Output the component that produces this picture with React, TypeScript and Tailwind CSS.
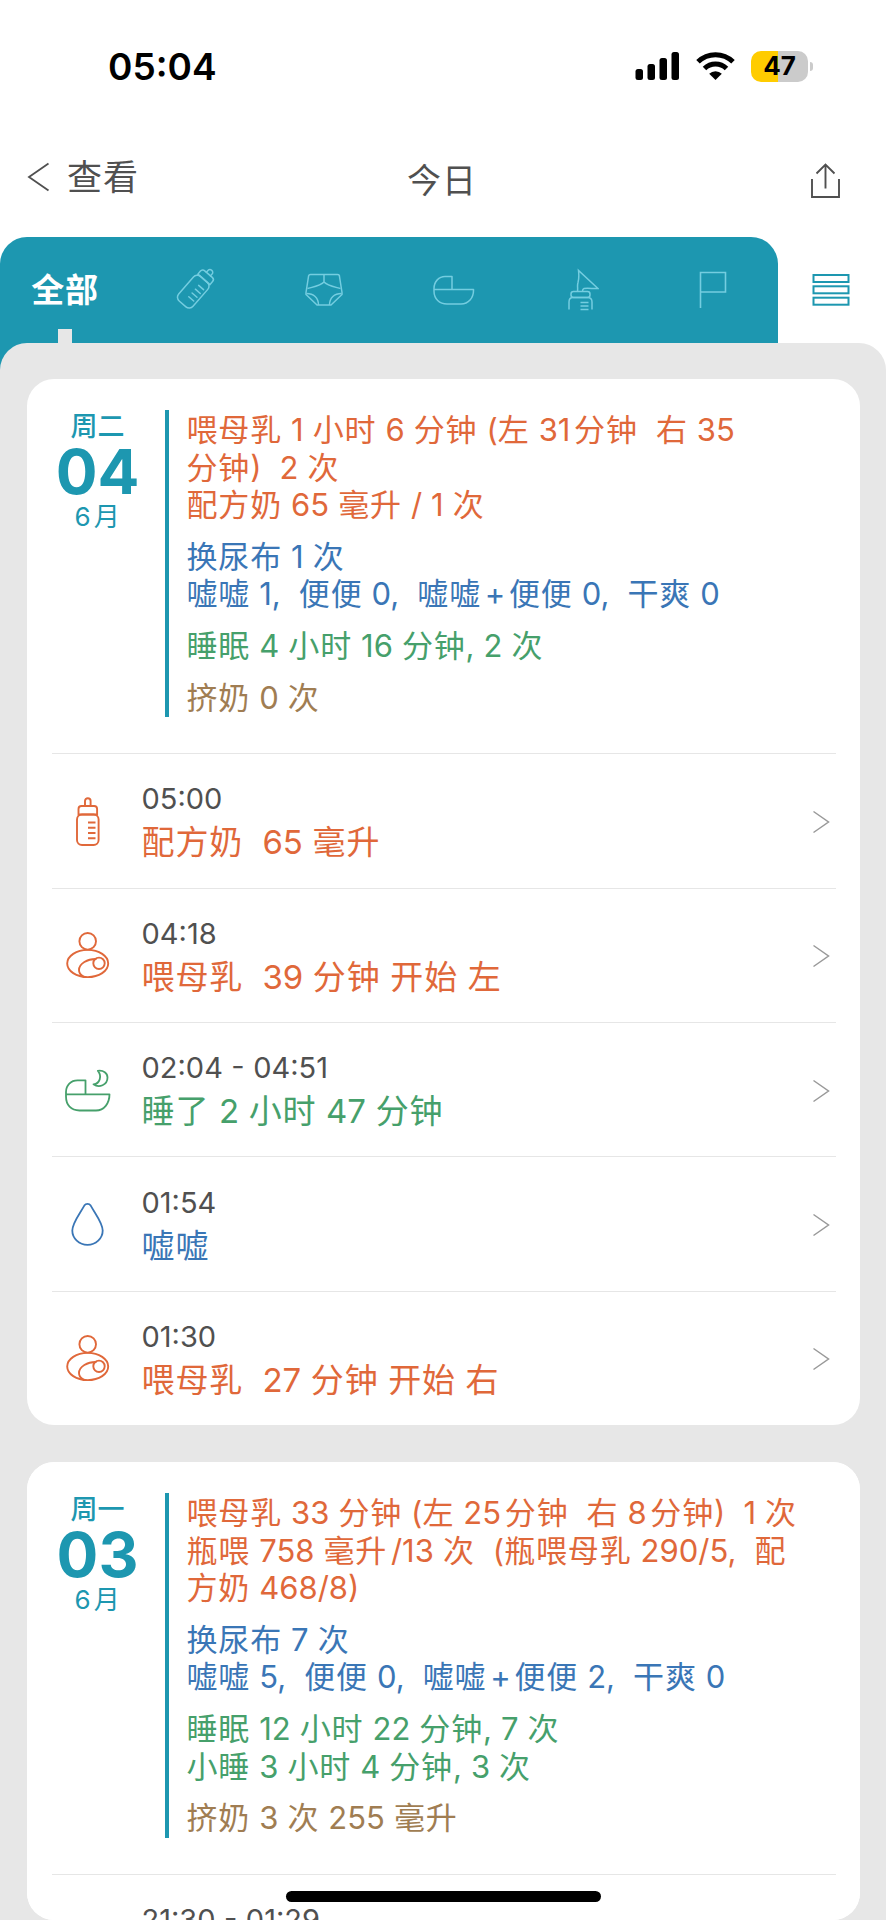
import type { ReactNode } from 'react'

type Tone = 'orange' | 'blue' | 'green' | 'brown'

interface Block {
  tone: Tone
  lines: string[]
}

interface Entry {
  time: string
  title: string
  tone: Tone
  icon: ReactNode
}

interface Day {
  weekday: string
  day: string
  month: string
  summary: Block[]
  entries: Entry[]
}

const TONES: Record<Tone, string> = {
  orange: 'text-[#e0683a]',
  blue: 'text-[#3a76b6]',
  green: 'text-[#46a06b]',
  brown: 'text-[#a07d52]',
}

const HAN = /[\u4e00-\u9fff]/

// Han characters are set slightly looser than latin text, and a digit
// that touches one directly gets a small gap
function Mixed({ text }: { text: string }) {
  const runs = text.match(/[\u4e00-\u9fff]+|[^\u4e00-\u9fff]+/g) || []
  return (
    <>
      {runs.map((run, i) => {
        const prev = runs[i - 1] || ''
        const gap = HAN.test(run) ? /[\d+/]$/.test(prev) : i > 0 && /^[\d+/]/.test(run)
        return (
          <span key={i} className={`${HAN.test(run) ? 'tracking-[0.027em]' : 'tracking-[0em]'} ${gap ? 'ml-[0.12em]' : ''}`}>
            {run}
          </span>
        )
      })}
    </>
  )
}

function BottleIcon() {
  return (
    <svg width="48" height="54" viewBox="0 0 48 54" fill="none" stroke="currentColor" strokeWidth="1.9" strokeLinecap="round">
      <path d="M22 12V7a2.800 2.800 0 0 1 5.600 0V12" />
      <path d="M15.500 20.500V15a3 3 0 0 1 3-3h12.600a3 3 0 0 1 3 3v5.500z" />
      <rect x="14" y="20.500" width="21.600" height="30.500" rx="5" />
      <path d="M25 28.500h7.500M25 33.800h7.500M25 39h7.500M25 44.300h7.500" strokeLinecap="butt" />
    </svg>
  )
}

function NursingIcon() {
  return (
    <svg width="48" height="54" viewBox="0 0 48 54" fill="none" stroke="currentColor" strokeWidth="1.9">
      <circle cx="24.700" cy="13.300" r="8.300" />
      <ellipse cx="24.700" cy="35.500" rx="20.500" ry="13.600" />
      <circle cx="36" cy="35.300" r="5.700" />
      <path d="M33.500 31c-9-.3-17.500 4.500-17.500 11 0 2.800 1.500 5 4.500 6.500" />
    </svg>
  )
}

function CradleIcon() {
  return (
    <svg width="48" height="54" viewBox="0 0 48 54" fill="none" stroke="currentColor" strokeWidth="1.8" strokeLinejoin="round">
      <path d="M3 31.300h43.500C46.500 40.500 41 47.500 33 47.500H16.500C8 47.500 3 42 3 33.500V29C3 22 8 17.300 14.500 17.300h8v14" />
      <path d="M34.800 7.800c4.500 5.500 2 12.800-4.300 13.500 5.500 4 14 .8 14-6.800 0-4.500-4-7.500-9.700-6.700z" />
    </svg>
  )
}

function DropIcon() {
  return (
    <svg width="48" height="54" viewBox="0 0 48 54" fill="none" stroke="currentColor" strokeWidth="1.8">
      <path d="M21.300 8.600c1.600-2.400 4.800-2.400 6.400 0 5 8.900 12 17.400 12 25a15.200 14.300 0 0 1-30.400 0c0-7.600 7-16.100 12-25z" />
    </svg>
  )
}

const DAYS: Day[] = [
  {
    weekday: '周二',
    day: '04',
    month: '6月',
    summary: [
      { tone: 'orange', lines: ['喂母乳 1 小时 6 分钟 (左 31分钟  右 35', '分钟)  2 次', '配方奶 65 毫升 / 1 次'] },
      { tone: 'blue', lines: ['换尿布 1 次', '嘘嘘 1,  便便 0,  嘘嘘+便便 0,  干爽 0'] },
      { tone: 'green', lines: ['睡眠 4 小时 16 分钟, 2 次'] },
      { tone: 'brown', lines: ['挤奶 0 次'] },
    ],
    entries: [
      { time: '05:00', title: '配方奶  65 毫升', tone: 'orange', icon: <BottleIcon /> },
      { time: '04:18', title: '喂母乳  39 分钟 开始 左', tone: 'orange', icon: <NursingIcon /> },
      { time: '02:04 - 04:51', title: '睡了 2 小时 47 分钟', tone: 'green', icon: <CradleIcon /> },
      { time: '01:54', title: '嘘嘘', tone: 'blue', icon: <DropIcon /> },
      { time: '01:30', title: '喂母乳  27 分钟 开始 右', tone: 'orange', icon: <NursingIcon /> },
    ],
  },
  {
    weekday: '周一',
    day: '03',
    month: '6月',
    summary: [
      { tone: 'orange', lines: ['喂母乳 33 分钟 (左 25分钟  右 8分钟)  1 次', '瓶喂 758 毫升/13 次  (瓶喂母乳 290/5,  配', '方奶 468/8)'] },
      { tone: 'blue', lines: ['换尿布 7 次', '嘘嘘 5,  便便 0,  嘘嘘+便便 2,  干爽 0'] },
      { tone: 'green', lines: ['睡眠 12 小时 22 分钟, 7 次', '小睡 3 小时 4 分钟, 3 次'] },
      { tone: 'brown', lines: ['挤奶 3 次 255 毫升'] },
    ],
    entries: [{ time: '21:30 - 01:29', title: '', tone: 'green', icon: null }],
  },
]

function StatusBar() {
  return (
    <div className="flex h-[132px] items-center pl-[108px] pr-[73px]">
      <span className="flex-1 text-[37px] font-semibold leading-none text-black">05:04</span>
      <svg width="45" height="28" viewBox="0 0 45 28" className="mr-4 text-black" fill="currentColor">
        <rect x="0.500" y="17" width="7.500" height="11" rx="2.500" />
        <rect x="12.500" y="12" width="7.500" height="16" rx="2.500" />
        <rect x="24.500" y="6" width="7.500" height="22" rx="2.500" />
        <rect x="36.500" y="0" width="7.500" height="28" rx="2.500" />
      </svg>
      <svg width="39" height="28" viewBox="0 0 39 28" className="mr-4 text-black" fill="none" stroke="currentColor">
        <path d="M2 9.800a25 25 0 0 1 35 0" strokeWidth="5" />
        <path d="M8.500 16.500a15.800 15.800 0 0 1 22 0" strokeWidth="5" />
        <path d="M13.200 21.700a9 9 0 0 1 12.600 0L19.500 28z" fill="currentColor" stroke="none" />
      </svg>
      <div className="flex h-[31px] w-[57px] items-center justify-center rounded-[10px] bg-[linear-gradient(90deg,#ffcc00_47%,#cbcbcb_47%)]">
        <span className="text-[26px] font-bold leading-none text-black">47</span>
      </div>
      <div className="ml-0.5 h-[9px] w-[3px] rounded-r-full bg-[#cbcbcb]" />
    </div>
  )
}

function NavBar() {
  return (
    <div className="flex h-[105px] items-start justify-between pl-[27px] pr-[45px] text-[#505050]">
      <div className="flex w-[200px] items-center pt-[23px]">
        <svg width="24" height="32" viewBox="0 0 24 32" fill="none" stroke="currentColor" strokeWidth="1.800">
          <path d="M21.500 2.500L2 16l19.500 13.500" />
        </svg>
        <span className="ml-4 text-[35px] leading-[44px] tracking-[0.03em]">查看</span>
      </div>
      <span className="pt-[27px] text-[34px] leading-[44px] tracking-[0.03em]">今日</span>
      <div className="flex w-[184px] justify-end pt-[30px]">
        <svg width="32" height="38" viewBox="0 0 32 38" fill="none" stroke="currentColor" strokeWidth="1.900">
          <path d="M3 17v18h27V17M16.500 26.500V2.500M7.500 11.500l9-9 9 9" />
        </svg>
      </div>
    </div>
  )
}

function TabBar() {
  return (
    <div className="flex h-[106px]">
      <div className="relative flex h-[140px] w-[778px] rounded-t-[27px] bg-[#1d97b0] text-[#74cde0]">
        <div className="flex h-[106px] w-[130px] items-center justify-center pt-0.5 text-[33px] font-bold tracking-[0.02em] text-white">
          全部
        </div>
        <div className="flex h-[106px] w-[129px] items-center justify-center">
          <svg width="44" height="44" viewBox="0 0 44 44" fill="none" stroke="currentColor" strokeWidth="1.500" strokeLinecap="round">
            <g transform="translate(24 19.300) rotate(41)">
              <path d="M-2.700-17.500v-2.300a2.700 2.700 0 0 1 5.400 0v2.300" />
              <path d="M-8-10.500v-4a3 3 0 0 1 3-3H5a3 3 0 0 1 3 3v4z" />
              <rect x="-9.500" y="-10.500" width="19" height="32.500" rx="5" />
              <path d="M0-2.500h6.500M0 2.500h6.500M0 7.500h6.500M0 12.500h6.500" />
            </g>
          </svg>
        </div>
        <div className="flex h-[106px] w-[130px] items-center justify-center">
          <svg width="38" height="34" viewBox="0 0 38 34" fill="none" stroke="currentColor" strokeWidth="1.500" strokeLinejoin="round">
            <path d="M5.500 1.500h27a2 2 0 0 1 2 2L37 19.500v2L26 32H12L1 21.500v-2L3.500 3.500a2 2 0 0 1 2-2z" />
            <path d="M19 1.500V9M2.500 15.500C10 13.500 16 12.500 19 9c3 3.500 9 4.500 16.500 6.500" />
            <path d="M1.500 20.500c7 0 12 4 12 11.500M36.500 20.500c-7 0-12 4-12 11.500" />
          </svg>
        </div>
        <div className="flex h-[106px] w-[129px] items-center justify-center">
          <svg width="42" height="32" viewBox="0 0 42 32" fill="none" stroke="currentColor" strokeWidth="1.500" strokeLinejoin="round">
            <path d="M1 15.500h39.500v1c0 7.500-5 13.500-12.500 13.500H14C6.500 30 1 25 1 17v-2.500C1 7.500 6 2.500 12 2.500h7v13" />
          </svg>
        </div>
        <div className="flex h-[106px] w-[129px] items-center justify-center">
          <svg width="32" height="44" viewBox="0 0 32 44" fill="none" stroke="currentColor" strokeWidth="1.500">
            <path d="M10.500 23.500c.5-4-.5-6 .5-9 1.200-4 1-7.500.5-12L31 20.500c-4 .5-10-1-14 0-1.200.3-1.500 1-1.500 3" />
            <rect x="4" y="23.500" width="19" height="6" rx="2.500" />
            <path d="M2 41.500V34c0-2.500 1.500-4.500 4-4.500h14.500c3 0 4.500 2 4.500 4.500v7.500M13.500 34.500h8M13.500 38h8M13.500 41.500h8" />
          </svg>
        </div>
        <div className="flex h-[106px] w-[131px] items-center justify-center">
          <svg width="28" height="38" viewBox="0 0 28 38" fill="none" stroke="currentColor" strokeWidth="1.600">
            <path d="M1.500 37V1.500h25V21h-25" />
          </svg>
        </div>
        <div className="absolute left-[58px] top-[92px] h-4 w-[13.500px] bg-[#e7e7e7]" />
      </div>
      <div className="flex flex-1 items-center justify-center pr-0.5 text-[#1d97b0]">
        <svg width="38" height="34" viewBox="0 0 38 34" fill="none" stroke="currentColor" strokeWidth="2">
          <rect x="1.500" y="2" width="35" height="7" />
          <rect x="1.500" y="13.300" width="35" height="7" />
          <rect x="1.500" y="24.700" width="35" height="7" />
        </svg>
      </div>
    </div>
  )
}

function EntryRow({ entry }: { entry: Entry }) {
  return (
    <div className="ml-[25px] mr-[24px] flex h-[134.400px] items-center border-t-[1.500px] border-[#e6e6e6]">
      <div className={`ml-[11px] flex w-12 justify-center ${TONES[entry.tone]}`}>{entry.icon}</div>
      <div className="ml-[31px] flex-1 whitespace-pre pt-[3px] [word-spacing:0.02em]">
        <div className="text-[29px] leading-[40px] text-[#505050]">{entry.time}</div>
        <div className={`h-[46px] text-[33px] leading-[46px] ${TONES[entry.tone]}`}>
          <Mixed text={entry.title} />
        </div>
      </div>
      <svg width="20" height="26" viewBox="0 0 20 26" className="mr-[5px] text-[#999999]" fill="none" stroke="currentColor" strokeWidth="1.500">
        <path d="M2.500 3.500L17.500 14 2.500 24.500" />
      </svg>
    </div>
  )
}

function DayCard({ day }: { day: Day }) {
  return (
    <section className="overflow-hidden rounded-[27px] bg-white">
      <div className="flex pb-9 pt-[31px]">
        <div className="flex w-[138px] flex-col items-center pl-1 pt-px text-[#1d97b0]">
          <span className="text-[27px] font-medium leading-[32px]">{day.weekday}</span>
          <span className="text-[62px] font-bold leading-[58px]">{day.day}</span>
          <span className="text-[26px] leading-[32px]">
            <Mixed text={day.month} />
          </span>
        </div>
        <div className="flex flex-col gap-[14px] whitespace-pre border-l-[4.500px] border-[#1d97b0] pb-px pl-[18px] pt-px [word-spacing:0.02em]">
          {day.summary.map((block) => (
            <div key={block.tone} className={`text-[31px] leading-[37.600px] ${TONES[block.tone]}`}>
              {block.lines.map((line) => (
                <div key={line} className="h-[37.600px]">
                  <Mixed text={line} />
                </div>
              ))}
            </div>
          ))}
        </div>
      </div>
      {day.entries.map((entry) => (
        <EntryRow key={entry.time} entry={entry} />
      ))}
    </section>
  )
}

export default function App() {
  return (
    <div className="relative h-[1920px] w-[886px] overflow-hidden bg-white font-[Inter,'Noto_Sans_CJK_SC',sans-serif]">
      <StatusBar />
      <NavBar />
      <TabBar />
      <main className="relative flex h-[1577px] flex-col gap-[37px] rounded-t-[27px] bg-[#e7e7e7] px-[26.500px] pt-9">
        <DayCard day={DAYS[0]} />
        <div className="h-[458px] overflow-hidden rounded-[27px] bg-white">
          <DayCard day={DAYS[1]} />
        </div>
      </main>
      <div className="absolute bottom-[18px] left-[286px] h-[11px] w-[315px] rounded-full bg-black" />
    </div>
  )
}
